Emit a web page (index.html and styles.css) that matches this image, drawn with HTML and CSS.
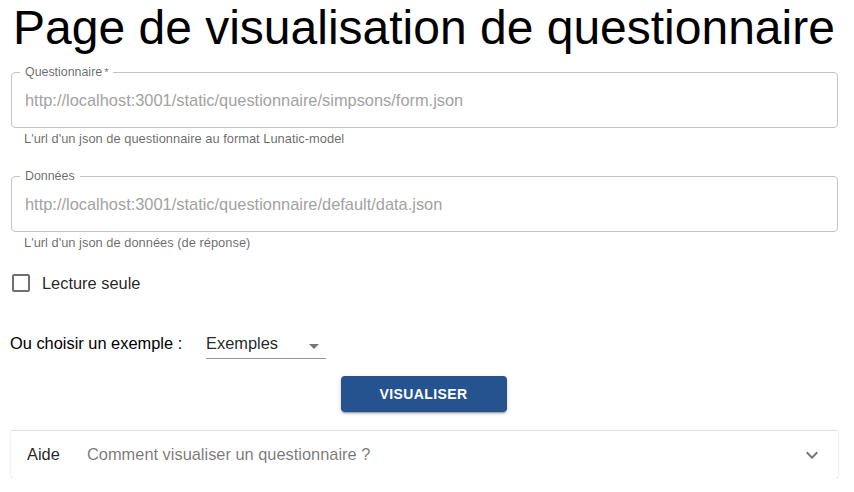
FILE: index.html
```html
<!DOCTYPE html>
<html lang="fr">
<head>
<meta charset="utf-8">
<title>Visualisation</title>
<link rel="stylesheet" href="styles.css">
</head>
<body>
<div class="page">
  <h1 class="title">Page de visualisation de questionnaire</h1>

  <div class="field field-first">
    <div class="box">
      <span class="label">Questionnaire<span class="req">*</span></span>
      <span class="value">http://localhost:3001/static/questionnaire/simpsons/form.json</span>
    </div>
    <div class="helper">L'url d'un json de questionnaire au format Lunatic-model</div>
  </div>

  <div class="field">
    <div class="box">
      <span class="label">Données</span>
      <span class="value">http://localhost:3001/static/questionnaire/default/data.json</span>
    </div>
    <div class="helper">L'url d'un json de données (de réponse)</div>
  </div>

  <label class="check-row">
    <span class="checkbox"></span>
    <span class="check-label">Lecture seule</span>
  </label>

  <div class="select-row">
    <span class="select-caption">Ou choisir un exemple :</span>
    <div class="select">
      <span class="select-value">Exemples</span>
      <svg class="select-arrow" viewBox="0 0 24 24" width="24" height="24"><path d="M7 10l5 5 5-5z" fill="rgba(0,0,0,0.54)"/></svg>
    </div>
  </div>

  <div class="actions">
    <button class="btn">VISUALISER</button>
  </div>

  <div class="accordion">
    <span class="acc-title">Aide</span>
    <span class="acc-sub">Comment visualiser un questionnaire ?</span>
    <svg class="acc-icon" viewBox="0 0 24 24" width="24" height="24"><path d="M16.59 8.59 12 13.17 7.41 8.59 6 10l6 6 6-6z" fill="rgba(0,0,0,0.54)"/></svg>
  </div>
</div>
</body>
</html>
```

FILE: styles.css
```css
* { box-sizing: border-box; }
html, body { margin: 0; padding: 0; background: #fff; }
body {
  font-family: "Liberation Sans", Arial, Helvetica, sans-serif;
  color: rgba(0,0,0,0.87);
}
.page {
  width: 827px;
  margin-left: 11px;
}
.title {
  margin: 0;
  font-size: 48px;
  font-weight: 400;
  line-height: 56px;
  color: #000;
  padding-left: 2px;
}
.field { display: flex; flex-direction: column; margin-top: 29px; }
.field-first { margin-top: 16px; }
.box {
  position: relative;
  height: 56px;
  border: 1px solid #c4c4c4;
  border-radius: 4px;
  display: flex;
  align-items: center;
  padding: 0 13px;
}
.label {
  position: absolute;
  left: 8px;
  top: -8px;
  padding: 0 5px;
  background: #fff;
  font-size: 12.4px;
  line-height: 14px;
  color: rgba(0,0,0,0.6);
}
.req { font-size: 11px; margin-left: 2px; }
.value {
  font-size: 16.4px;
  color: #a2a2a2;
  line-height: 20px;
}
.helper {
  margin: 3px 0 0 13px;
  font-size: 12.9px;
  line-height: 16px;
  color: rgba(0,0,0,0.6);
}
.check-row {
  display: flex;
  align-items: center;
  margin-top: 23px;
  height: 18px;
}
.checkbox {
  width: 18px;
  height: 18px;
  border: 2px solid #6f6f6f;
  border-radius: 2px;
  margin-left: 1px;
}
.check-label {
  margin-left: 12px;
  font-size: 16.4px;
  color: rgba(0,0,0,0.87);
}
.select-row {
  display: flex;
  align-items: flex-start;
  margin-top: 39px;
  height: 28px;
}
.select-caption {
  font-size: 16.4px;
  line-height: 20px;
  color: #000;
  margin-left: -1px;
  padding-top: 2px;
  width: 196px;
}
.select {
  position: relative;
  width: 120px;
  height: 28px;
  border-bottom: 1px solid rgba(0,0,0,0.42);
  display: flex;
  justify-content: space-between;
}
.select-value {
  font-size: 16.4px;
  line-height: 20px;
  padding-top: 2px;
  color: rgba(0,0,0,0.87);
}
.select-arrow { margin-top: 3px; }
.actions {
  display: flex;
  justify-content: center;
  margin-top: 17px;
}
.btn {
  width: 166px;
  height: 36px;
  background: #25538f;
  color: #fff;
  border: 0;
  border-radius: 4px;
  font-family: "Liberation Sans", Arial, sans-serif;
  font-size: 14px;
  font-weight: 700;
  letter-spacing: 0.4px;
  box-shadow: 0px 3px 1px -2px rgba(0,0,0,0.2), 0px 2px 2px 0px rgba(0,0,0,0.14), 0px 1px 5px 0px rgba(0,0,0,0.12);
  margin-left: -2px;
}
.accordion {
  margin-top: 18px;
  height: 48px;
  display: flex;
  align-items: center;
  padding: 0 16px;
  background: #fff;
  border-top: 1px solid #e0e0e0;
  border-radius: 2px;
  box-shadow: 0px 2px 1px -1px rgba(0,0,0,0.2), 0px 1px 1px 0px rgba(0,0,0,0.14), 0px 1px 3px 0px rgba(0,0,0,0.12);
}
.acc-title { font-size: 16.4px; color: rgba(0,0,0,0.87); width: 60px; }
.acc-sub { font-size: 16.4px; color: rgba(0,0,0,0.54); flex: 1; }
.acc-icon { margin-right: -2px; }
```
